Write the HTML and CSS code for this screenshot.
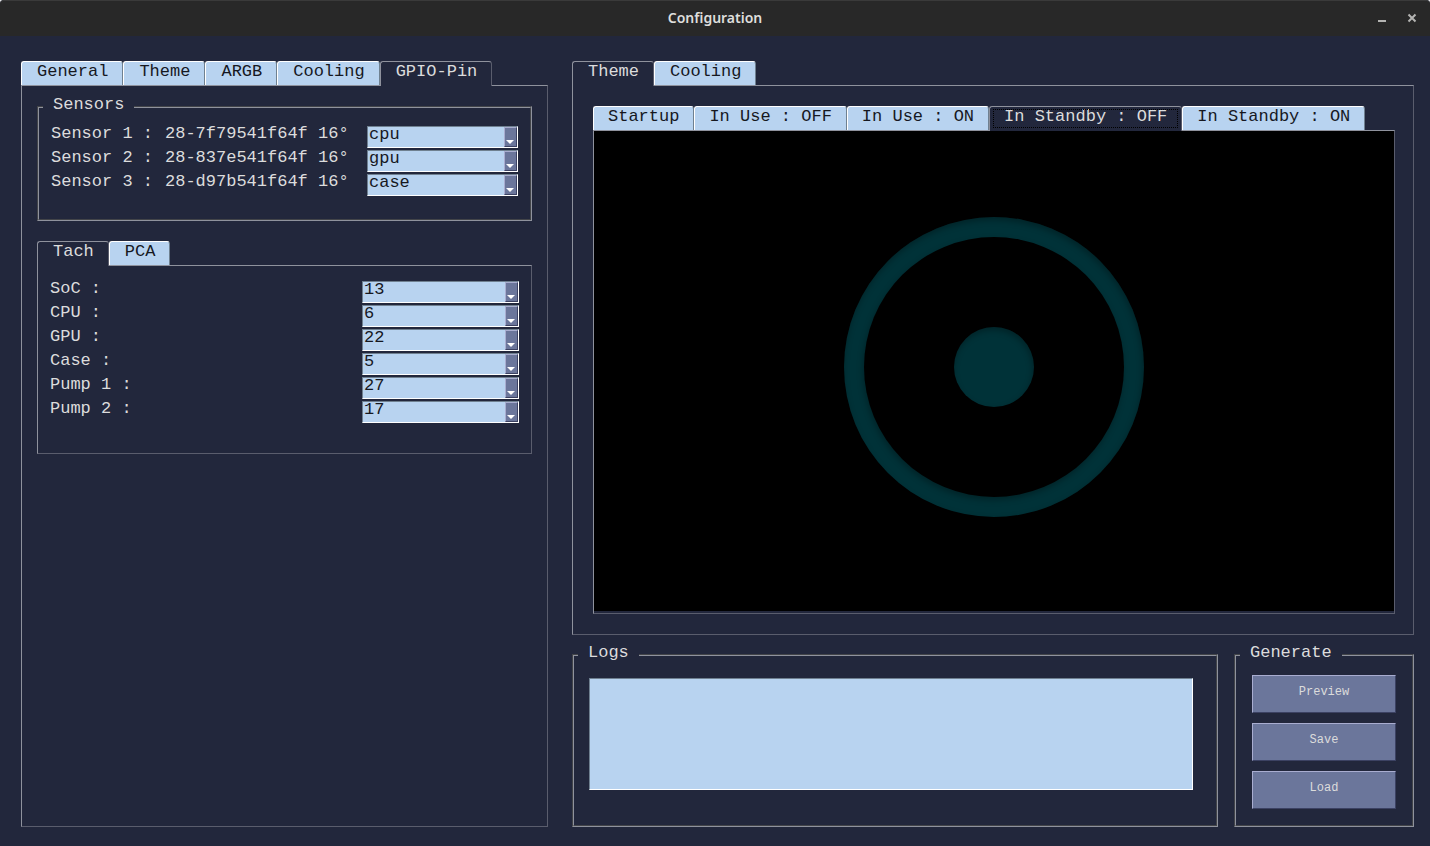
FILE: index.html
```html
<!DOCTYPE html>
<html lang="en">
<head>
<meta charset="utf-8">
<title>Configuration</title>
<link rel="stylesheet" href="styles.css">
</head>
<body>
<div class="window">
  <header class="titlebar">
    <h1 class="title">Configuration</h1>
    <div class="window-buttons">
      <button class="window-button" type="button" aria-label="Minimize"><svg width="10" height="10" viewBox="0 0 10 10"><path d="M1 8h8" stroke="#b4b4b2" stroke-width="2"/></svg></button>
      <button class="window-button" type="button" aria-label="Close"><svg width="10" height="10" viewBox="0 0 10 10"><path d="M1.500 1.500l7 7M8.500 1.500l-7 7" stroke="#b4b4b2" stroke-width="2"/></svg></button>
    </div>
  </header>

  <main class="content">
    <section class="notebook settings">
      <div class="tabs" role="tablist">
        <button class="tab" type="button" role="tab">General</button>
        <button class="tab" type="button" role="tab">Theme</button>
        <button class="tab" type="button" role="tab">ARGB</button>
        <button class="tab" type="button" role="tab">Cooling</button>
        <button class="tab selected" type="button" role="tab" aria-selected="true">GPIO-Pin</button>
      </div>
      <div class="pane settings-pane">
        <fieldset class="group sensors">
          <legend>Sensors</legend>
          <div class="row"><label class="sensor-name" for="s1">Sensor 1 :</label><span class="sensor-id">28-7f79541f64f 16°</span><span class="combo sensor-combo"><select id="s1"><option>cpu</option></select></span></div>
          <div class="row"><label class="sensor-name" for="s2">Sensor 2 :</label><span class="sensor-id">28-837e541f64f 16°</span><span class="combo sensor-combo"><select id="s2"><option>gpu</option></select></span></div>
          <div class="row"><label class="sensor-name" for="s3">Sensor 3 :</label><span class="sensor-id">28-d97b541f64f 16°</span><span class="combo sensor-combo"><select id="s3"><option>case</option></select></span></div>
        </fieldset>
        <section class="notebook">
          <div class="tabs" role="tablist">
            <button class="tab selected" type="button" role="tab" aria-selected="true">Tach</button>
            <button class="tab" type="button" role="tab">PCA</button>
          </div>
          <div class="pane tach-pane">
            <div class="row"><label for="t1">SoC :</label><span class="combo"><select id="t1"><option>13</option></select></span></div>
            <div class="row"><label for="t2">CPU :</label><span class="combo"><select id="t2"><option>6</option></select></span></div>
            <div class="row"><label for="t3">GPU :</label><span class="combo"><select id="t3"><option>22</option></select></span></div>
            <div class="row"><label for="t4">Case :</label><span class="combo"><select id="t4"><option>5</option></select></span></div>
            <div class="row"><label for="t5">Pump 1 :</label><span class="combo"><select id="t5"><option>27</option></select></span></div>
            <div class="row"><label for="t6">Pump 2 :</label><span class="combo"><select id="t6"><option>17</option></select></span></div>
          </div>
        </section>
      </div>
    </section>

    <div class="preview">
      <section class="notebook preview-notebook">
        <div class="tabs" role="tablist">
          <button class="tab selected" type="button" role="tab" aria-selected="true">Theme</button>
          <button class="tab" type="button" role="tab">Cooling</button>
        </div>
        <div class="pane theme-pane">
          <section class="notebook preview-notebook">
            <div class="tabs compact" role="tablist">
              <button class="tab" type="button" role="tab">Startup</button>
              <button class="tab" type="button" role="tab">In Use : OFF</button>
              <button class="tab" type="button" role="tab">In Use : ON</button>
              <button class="tab selected focused" type="button" role="tab" aria-selected="true">In Standby : OFF</button>
              <button class="tab" type="button" role="tab">In Standby : ON</button>
            </div>
            <div class="pane screen-pane">
              <div class="screen"><div class="ring"><div class="hole"><div class="dot"></div></div></div></div>
            </div>
          </section>
        </div>
      </section>
      <div class="bottom">
        <fieldset class="group logs">
          <legend>Logs</legend>
          <textarea class="log" aria-label="Logs"></textarea>
        </fieldset>
        <fieldset class="group generate">
          <legend>Generate</legend>
          <button class="action" type="button">Preview</button>
          <button class="action" type="button">Save</button>
          <button class="action" type="button">Load</button>
        </fieldset>
      </div>
    </div>
  </main>
</div>
</body>
</html>
```
FILE: styles.css
```css
:root {
  --bg: #22273c;
  --field: #b8d3f0;
  --ink: #16181f;
  --text: #dcdcdc;
  --line-light: #8f929d;
  --line-dark: #5a5d6d;
  --shade: #6f8090;
  --button: #6b769b;
}

*, *::before, *::after { box-sizing: border-box; }

body {
  margin: 0;
  background: #e8e8e8;
  color: var(--text);
  font-family: "Liberation Mono", monospace;
  font-size: 17px;
}

button, select, textarea { font: inherit; margin: 0; }

.window {
  display: flex;
  flex-direction: column;
  min-height: 100vh;
  background: var(--bg);
  border-radius: 4px 4px 0 0;
}

.titlebar {
  display: grid;
  grid-template-columns: 1fr auto 1fr;
  align-items: center;
  height: 36px;
  padding: 0 13px 2px;
  background: #282828;
  border-top: 1px solid #3a3a3a;
  border-radius: 4px 4px 0 0;
}

.title {
  grid-column: 2;
  margin: 0;
  color: #dededc;
  font-family: "Noto Sans", sans-serif;
  font-size: 14px;
  font-weight: 600;
  line-height: 20px;
}

.window-buttons {
  display: flex;
  justify-content: flex-end;
  gap: 20px;
}

.window-button {
  display: flex;
  padding: 0;
  border: 0;
  background: none;
}

.content {
  flex: 1;
  display: grid;
  grid-template-columns: 527fr 842fr;
  gap: 24px;
  padding: 25px 16px 19px 21px;
}

.notebook {
  display: flex;
  flex-direction: column;
  min-width: 0;
}

.tabs {
  position: relative;
  z-index: 1;
  display: flex;
  align-items: flex-start;
  height: 25px;
  margin-bottom: -1px;
}

.tab {
  height: 24px;
  padding: 0 14px 3px 15px;
  border: 1px solid;
  border-width: 1px 1px 0;
  border-color: #fff var(--shade) #fff #fff;
  border-radius: 3px 3px 0 0;
  background: var(--field);
  color: var(--ink);
  line-height: 20px;
  white-space: nowrap;
}

.compact .tab { padding-left: 14px; }

.tab.selected {
  position: relative;
  height: 25px;
  padding-bottom: 4px;
  border-color: var(--line-light) var(--line-dark) var(--bg) var(--line-light);
  background: var(--bg);
  color: var(--text);
}

.tab.focused::after {
  content: "";
  position: absolute;
  inset: 2px 3px 3px;
  border: 1px dotted #000;
}

.pane {
  flex: 1;
  border: 1px solid;
  border-color: var(--line-light) var(--line-dark) var(--line-dark) var(--line-light);
}

.settings-pane {
  display: flex;
  flex-direction: column;
  gap: 20px;
  padding: 8px 15px 15px;
}

.settings-pane .notebook { flex: none; }

.group {
  min-width: 0;
  margin: 0;
  border: 2px groove var(--line-light);
}

/* The legend sits near the left edge whatever the group's own padding. */
.group legend {
  padding: 0 10px 4px;
  line-height: 22px;
}

.sensors { padding: 6px 12px 23px; }

.sensors legend { margin-left: -8px; }

.row {
  display: flex;
  justify-content: space-between;
  line-height: 16px;
}

.row + .row { margin-top: 2px; }

.sensor-name { width: 114px; }

.sensor-id { flex: 1; }

.tach-pane { padding: 15px 12px 30px; }

.combo {
  position: relative;
  width: 157px;
  height: 22px;
}

.sensor-combo { width: 151px; }

.combo select {
  display: block;
  width: 100%;
  height: 22px;
  padding: 0 16px 4px 1px;
  appearance: none;
  border: 1px solid;
  border-color: var(--shade) #fff #fff var(--shade);
  border-radius: 0;
  background: var(--field);
  color: var(--ink);
  line-height: 16px;
}

.combo::before {
  content: "";
  position: absolute;
  inset: 1px 1px 1px auto;
  width: 13px;
  border: 1px solid;
  border-color: #a9add0 #3c4263 #3c4263 #a9add0;
  background: var(--button);
  pointer-events: none;
}

.combo::after {
  content: "";
  position: absolute;
  right: 4px;
  bottom: 4px;
  border: 4px solid transparent;
  border-top-color: #fff;
  border-bottom-width: 0;
  pointer-events: none;
}

.preview {
  display: flex;
  flex-direction: column;
  gap: 7px;
  min-width: 0;
}

.preview-notebook { flex: 1; }

.theme-pane {
  display: flex;
  flex-direction: column;
  padding: 20px 18px 20px 20px;
}

.screen-pane {
  display: flex;
  padding-bottom: 2px;
}

.screen {
  flex: 1;
  display: grid;
  place-items: center;
  padding-bottom: 8px;
  background: #000;
}

.ring, .hole, .dot { border-radius: 50%; }

.ring, .hole {
  display: grid;
  place-items: center;
}

.ring, .dot {
  background: #003238;
  box-shadow: inset -1px 3px 6px rgba(0, 0, 0, .3);
}

.ring {
  width: 300px;
  height: 300px;
}

.hole {
  width: 260px;
  height: 260px;
  background: #000;
  box-shadow: -1px 3px 6px rgba(0, 0, 0, .3);
}

.dot {
  width: 80px;
  height: 80px;
}

.bottom {
  display: grid;
  grid-template-columns: 1fr 180px;
  gap: 16px;
}

.logs { padding: 10px 23px 35px 15px; }

.logs legend { margin-left: -11px; }

.log {
  display: block;
  width: 100%;
  height: 112px;
  padding: 2px;
  resize: none;
  border: 1px solid;
  border-color: var(--shade) #fff #fff var(--shade);
  border-radius: 0;
  background: var(--field);
  color: var(--ink);
}

.generate { padding: 7px 16px 16px; }

.generate legend { margin-left: -12px; }

.action {
  display: block;
  width: 100%;
  height: 38px;
  padding: 0 0 4px;
  border: 1px solid;
  border-color: #a9add0 #3c4263 #3c4263 #a9add0;
  background: var(--button);
  color: var(--text);
  font-size: 12px;
  line-height: 16px;
}

.action + .action { margin-top: 10px; }
```
